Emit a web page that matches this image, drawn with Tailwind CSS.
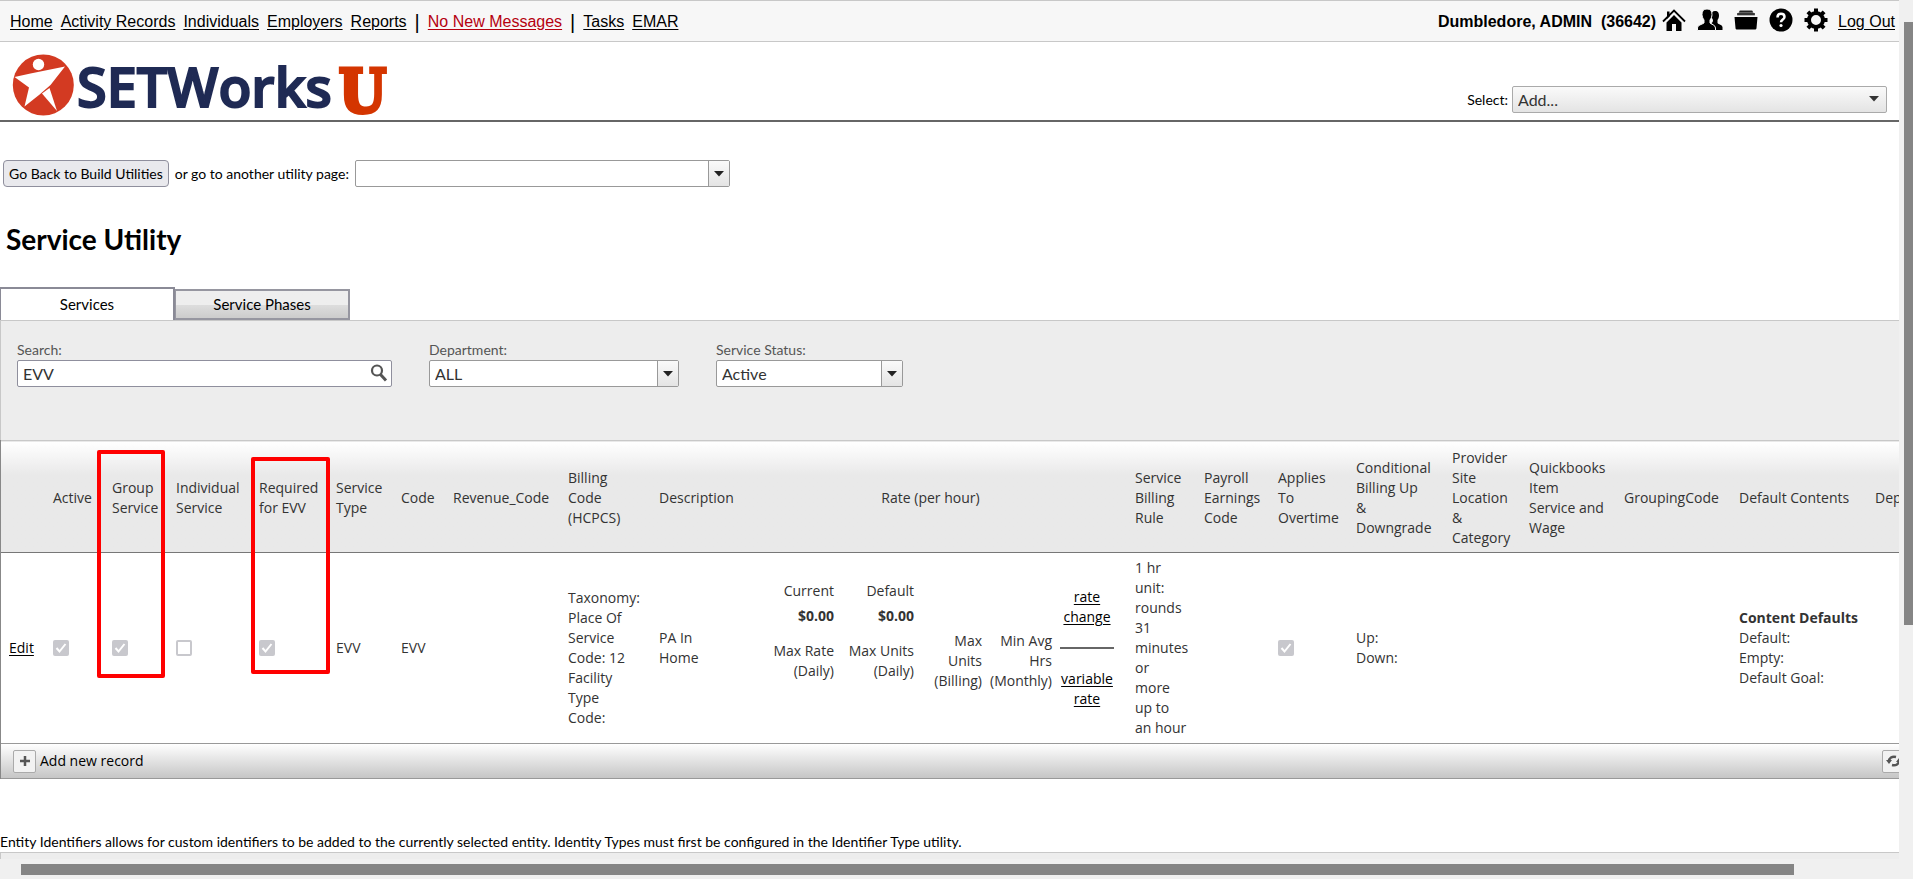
<!DOCTYPE html>
<html lang="en">
  <head>
    <meta charset="UTF-8" />
    <meta name="viewport" content="width=device-width, initial-scale=1.0" />
    <title>Service Utility</title>
    <script src="https://cdn.jsdelivr.net/npm/@tailwindcss/browser@4"></script>
  </head>

  <body class="h-screen overflow-hidden flex flex-col bg-[#f0f0f0] font-['Lato',sans-serif] text-sm text-black">
    <div class="flex flex-1 min-h-0">
      <!-- Page -->
      <div class="flex-1 min-w-0 overflow-hidden bg-white flex flex-col">

        <!-- Top bar -->
        <header class="h-[42px] shrink-0 flex justify-between items-center border-y border-[#c8c8c8] bg-[#f7f7f7] pt-0.5 pl-2.5 pr-1 font-['Liberation_Sans',Arial,sans-serif] text-base leading-5">
          <nav class="flex items-center gap-2">
            <a href="#" class="underline underline-offset-2">Home</a>
            <a href="#" class="underline underline-offset-2">Activity Records</a>
            <a href="#" class="underline underline-offset-2">Individuals</a>
            <a href="#" class="underline underline-offset-2">Employers</a>
            <a href="#" class="underline underline-offset-2">Reports</a>
            <span class="text-xl leading-5">|</span>
            <a href="#" class="underline underline-offset-2 text-[#b5000f]">No New Messages</a>
            <span class="text-xl leading-5">|</span>
            <a href="#" class="underline underline-offset-2">Tasks</a>
            <a href="#" class="underline underline-offset-2">EMAR</a>
          </nav>
          <div class="flex items-center gap-2.5">
            <span class="font-bold whitespace-pre">Dumbledore, ADMIN  (36642)</span>
            <div class="flex items-center gap-[11px] -ml-1 pb-1">
              <a href="#" aria-label="Home page">
                <svg class="w-6 h-6" viewBox="0 0 24 24"><path d="M4.500 14.500 12 7l7.500 7.500V23H14v-7h-4v7H4.500z" /><path d="M1 13.500 12 2.500l11 11" fill="none" stroke="#000" stroke-width="1.800" /><path d="M5 3.500h2.500v5L5 11z" /></svg>
              </a>
              <a href="#" aria-label="People">
                <svg class="w-[26px] h-6" viewBox="0 0 26 24"><path d="M18 3c3 0 4 2 4 4.500 0 2-.8 3.500-1.500 4.500v3c1 1.500 4.500 1.500 5 4V22h-8v-4l-3-3c1-.5 1.500-1.500 1.500-3-1-1.500-1.500-3-1.500-4.500C14.500 5 15.500 3 18 3z" /><path d="M10 1c3.500 0 5 2 5 5.500 0 2-.8 4-2 5.500v3c1.500 1.500 5.500 2 5.500 5v2.500H.5V20c0-3 4.500-3.500 6.500-5v-3C6 10.500 5 8.500 5 6.500 5 3 6.500 1 10 1z" stroke="#f7f7f7" /></svg>
              </a>
              <a href="#" aria-label="Files">
                <svg class="w-6 h-6" viewBox="0 0 24 24"><path d="M5 4C5 3 6 2.500 7 2.500h10c1 0 2 .5 2 1.500l2 3.500H3z" fill="#777" /><path d="M3 6h18M5.500 3.500h13" stroke="#222" stroke-width="1.500" /><path d="M.5 9h23l-1 11c0 1-.8 1.500-1.800 1.500H3.300c-1 0-1.800-.5-1.800-1.500z" /></svg>
              </a>
              <a href="#" aria-label="Help">
                <svg class="w-6 h-6" viewBox="0 0 24 24"><circle cx="12" cy="12" r="11.500" /><path d="M8.500 9.500C8.500 7 10 5.800 12 5.800s3.500 1.200 3.500 3.200c0 2.500-3.500 2.500-3.500 5.200" fill="none" stroke="#fff" stroke-width="2.500" /><circle cx="12" cy="17.500" r="1.600" fill="#fff" /></svg>
              </a>
              <a href="#" aria-label="Settings">
                <svg class="w-6 h-6" viewBox="0 0 24 24"><circle cx="12" cy="12" r="7" fill="none" stroke="#000" stroke-width="4" /><path d="M12 .5v5M12 18.500v5M.5 12h5M18.500 12h5M3.900 3.900l3.300 3.300M16.800 16.800l3.300 3.300M3.900 20.100l3.300-3.300M16.800 7.200l3.300-3.300" stroke="#000" stroke-width="4" /></svg>
              </a>
            </div>
            <a href="#" class="underline underline-offset-2">Log Out</a>
          </div>
        </header>

        <!-- Logo and quick add -->
        <div class="h-20 shrink-0 flex justify-between items-end border-b-2 border-[#666] pl-3 pr-3">
          <svg class="w-[380px] h-[70px] overflow-visible" viewBox="0 0 380 70" role="img" aria-label="SETWorks U">
            <circle cx="31.300" cy="35" r="30.500" fill="#d33a22" />
            <circle cx="26.500" cy="14.500" r="5.700" fill="#fff" />
            <path d="M2.500 27 18.500 23.500 53 16.500 38.500 35 27 45 12.500 56.500 17 37.500z" fill="#fff" />
            <path d="M30 43.500 37.500 38 45 61z" fill="#fff" />
            <text x="65" y="57" fill="#1f2a54" stroke="#1f2a54" stroke-width="2" font-family="Open Sans" font-weight="600" font-size="54">SETWorks</text>
            <text x="327" y="62" fill="#d43500" stroke="#d43500" stroke-width="4" font-family="DejaVu Serif Condensed, DejaVu Serif" font-weight="bold" font-size="60">U</text>
          </svg>
          <div class="flex items-center gap-1 pb-[7px]">
            <label for="add">Select:</label>
            <div class="relative w-[375px]">
              <select id="add" class="appearance-none w-full h-[27px] pl-[5px] border border-[#aaa] rounded-xs bg-linear-to-b from-[#fafafa] to-[#e4e4e4] text-base text-[#333]">
                <option>Add...</option>
              </select>
              <svg class="absolute right-2 top-2.5 w-2.5 h-1.5 pointer-events-none" viewBox="0 0 10 6"><path d="M0 0h10L5 5.500z" fill="#333" /></svg>
            </div>
          </div>
        </div>

        <!-- Utility navigation -->
        <div class="flex items-center gap-1.5 pl-[3px] mt-[38px]">
          <button class="h-[27px] px-[5px] border border-[#8f8f9d] rounded-sm bg-[#e9e9ed] whitespace-nowrap">Go Back to Build Utilities</button>
          <div class="flex items-center gap-1.5">
            <label for="utility">or go to another utility page:</label>
            <div class="relative w-[375px]">
              <select id="utility" class="block appearance-none w-full h-[27px] border border-[#999] rounded-xs bg-white text-base"><option></option></select>
              <span class="absolute inset-y-px right-px w-[21px] border-l border-[#999] bg-linear-to-b from-[#fafafa] to-[#e4e4e4] flex items-center justify-center pointer-events-none">
                <svg class="w-2.5 h-1.5" viewBox="0 0 10 6"><path d="M0 0h10L5 5.500z" fill="#222" /></svg>
              </span>
            </div>
          </div>
        </div>

        <h1 class="mt-9 ml-1.5 text-[28px] leading-8 font-bold">Service Utility</h1>

        <!-- Tabs -->
        <div class="mt-8 flex items-end" role="tablist">
          <button role="tab" class="w-[175px] h-[33px] bg-white border-t-2 border-x border-r-2 border-[#8a8a96] text-[15px]">Services</button>
          <button role="tab" class="w-[175px] h-[31px] bg-linear-to-b from-[#eee] from-50% via-[#ddd] via-52% to-[#ccc] border-2 border-l border-[#9696a0] text-[15px]">Service Phases</button>
        </div>

        <!-- Filters -->
        <section class="h-[120px] shrink-0 flex items-start gap-[37px] border-t border-l border-[#c8c8c8] bg-[#ededed] pl-4 pt-[19px]">
          <div class="w-[375px] text-[#555]">
            <label for="search" class="block leading-5">Search:</label>
            <div class="relative">
              <input id="search" type="text" value="EVV" class="block w-full h-[27px] pl-[5px] border border-[#8f8f9d] rounded-xs bg-white text-base text-[#333]" />
              <svg class="absolute right-1 top-1 w-[18px] h-[18px]" viewBox="0 0 18 18" fill="none" stroke="#555"><circle cx="7" cy="6.500" r="5" stroke-width="2.200" /><path d="m10.500 10.500 5.500 6" stroke-width="3" /></svg>
            </div>
          </div>
          <div class="w-[250px] text-[#555]">
            <label for="department" class="block leading-5">Department:</label>
            <div class="relative">
              <select id="department" class="block appearance-none w-full h-[27px] pl-[5px] border border-[#999] rounded-xs bg-white text-base text-[#333]"><option>ALL</option></select>
              <span class="absolute inset-y-px right-px w-[21px] border-l border-[#999] bg-linear-to-b from-[#fafafa] to-[#e4e4e4] flex items-center justify-center pointer-events-none">
                <svg class="w-2.5 h-1.5" viewBox="0 0 10 6"><path d="M0 0h10L5 5.500z" fill="#222" /></svg>
              </span>
            </div>
          </div>
          <div class="w-[187px] text-[#555]">
            <label for="status" class="block leading-5">Service Status:</label>
            <div class="relative">
              <select id="status" class="block appearance-none w-full h-[27px] pl-[5px] border border-[#999] rounded-xs bg-white text-base text-[#333]"><option>Active</option></select>
              <span class="absolute inset-y-px right-px w-[21px] border-l border-[#999] bg-linear-to-b from-[#fafafa] to-[#e4e4e4] flex items-center justify-center pointer-events-none">
                <svg class="w-2.5 h-1.5" viewBox="0 0 10 6"><path d="M0 0h10L5 5.500z" fill="#222" /></svg>
              </span>
            </div>
          </div>
        </section>

        <!-- Services grid -->
        <section class="relative w-[2016px] shrink-0 border-l border-[#888] font-['Open_Sans','Noto_Sans',sans-serif] text-sm leading-5 text-[#333]">
          <table class="table-fixed w-full">
            <colgroup>
              <col class="w-[44px]" />
              <col class="w-[59px]" />
              <col class="w-[64px]" />
              <col class="w-[83px]" />
              <col class="w-[77px]" />
              <col class="w-[65px]" />
              <col class="w-[52px]" />
              <col class="w-[115px]" />
              <col class="w-[91px]" />
              <col class="w-[91px]" />
              <col class="w-[385px]" />
              <col class="w-[69px]" />
              <col class="w-[74px]" />
              <col class="w-[78px]" />
              <col class="w-[96px]" />
              <col class="w-[77px]" />
              <col class="w-[95px]" />
              <col class="w-[115px]" />
              <col class="w-[136px]" />
              <col class="w-[149px]" />
            </colgroup>
            <thead>
              <tr class="h-28 border-t border-t-[#c8c8c8] border-b border-b-[#777] bg-linear-to-b from-white to-[#e9e9e9] to-30% text-left *:font-normal *:pl-2 *:pt-1.5 *:pb-1">
                <th></th>
                <th>Active</th>
                <th>Group Service</th>
                <th>Individual Service</th>
                <th>Required for EVV</th>
                <th>Service Type</th>
                <th>Code</th>
                <th>Revenue_Code</th>
                <th>Billing<br />Code<br />(HCPCS)</th>
                <th>Description</th>
                <th class="text-center pr-4">Rate (per hour)</th>
                <th>Service Billing Rule</th>
                <th>Payroll Earnings Code</th>
                <th>Applies<br />To<br />Overtime</th>
                <th>Conditional Billing Up<br />&amp;<br />Downgrade</th>
                <th>Provider<br />Site<br />Location<br />&amp;<br />Category</th>
                <th>Quickbooks<br />Item<br />Service and<br />Wage</th>
                <th>GroupingCode</th>
                <th>Default Contents</th>
                <th>Department</th>
              </tr>
            </thead>
            <tbody>
              <tr class="h-[190px] bg-white *:pl-2 *:py-[5px]">
                <td><a href="#" class="underline underline-offset-2 text-black">Edit</a></td>
                <td>
                  <input type="checkbox" checked disabled aria-label="Active" class="peer sr-only" />
                  <svg class="w-4 h-4" viewBox="0 0 16 16"><rect width="16" height="16" rx="2" fill="#c8c8cd" /><path d="m3.500 8 3 3.500 6-7.500" fill="none" stroke="#fff" stroke-width="2" /></svg>
                </td>
                <td>
                  <input type="checkbox" checked disabled aria-label="Group Service" class="peer sr-only" />
                  <svg class="w-4 h-4" viewBox="0 0 16 16"><rect width="16" height="16" rx="2" fill="#c8c8cd" /><path d="m3.500 8 3 3.500 6-7.500" fill="none" stroke="#fff" stroke-width="2" /></svg>
                </td>
                <td>
                  <input type="checkbox" disabled aria-label="Individual Service" class="block appearance-none w-4 h-4 border-2 border-[#c8c8cd] rounded-xs bg-white" />
                </td>
                <td>
                  <input type="checkbox" checked disabled aria-label="Required for EVV" class="peer sr-only" />
                  <svg class="w-4 h-4" viewBox="0 0 16 16"><rect width="16" height="16" rx="2" fill="#c8c8cd" /><path d="m3.500 8 3 3.500 6-7.500" fill="none" stroke="#fff" stroke-width="2" /></svg>
                </td>
                <td>EVV</td>
                <td>EVV</td>
                <td></td>
                <td><br />Taxonomy:<br />Place Of<br />Service<br />Code: 12<br />Facility<br />Type<br />Code:</td>
                <td>PA In<br />Home</td>
                <td>
                  <div class="flex justify-end items-center gap-2 pr-[13px]">
                    <div class="grid grid-cols-[80px_80px_68px_70px] grid-rows-[20px_20px_60px_20px] gap-y-[5px] items-center text-right">
                      <span>Current</span>
                      <span>Default</span>
                      <span></span>
                      <span></span>
                      <b>$0.00</b>
                      <b>$0.00</b>
                      <span></span>
                      <span></span>
                      <span>Max Rate<br />(Daily)</span>
                      <span>Max Units<br />(Daily)</span>
                      <span>Max<br />Units<br />(Billing)</span>
                      <span>Min Avg<br />Hrs<br />(Monthly)</span>
                    </div>
                    <div class="w-[54px] flex flex-col gap-5 text-center text-black">
                      <a href="#" class="underline underline-offset-2">rate change</a>
                      <hr class="border-t-2 border-[#666]" />
                      <a href="#" class="underline underline-offset-2">variable rate</a>
                    </div>
                  </div>
                </td>
                <td>1 hr<br />unit:<br />rounds<br />31<br />minutes<br />or<br />more<br />up to<br />an hour</td>
                <td></td>
                <td>
                  <input type="checkbox" checked disabled aria-label="Applies To Overtime" class="peer sr-only" />
                  <svg class="w-4 h-4" viewBox="0 0 16 16"><rect width="16" height="16" rx="2" fill="#c8c8cd" /><path d="m3.500 8 3 3.500 6-7.500" fill="none" stroke="#fff" stroke-width="2" /></svg>
                </td>
                <td>Up:<br />Down:</td>
                <td></td>
                <td></td>
                <td></td>
                <td><b>Content Defaults</b><br />Default:<br />Empty:<br />Default Goal:</td>
                <td></td>
              </tr>
            </tbody>
          </table>

          <!-- Grid footer -->
          <div class="h-9 flex items-center border-y border-[#999] bg-linear-to-b from-white to-[#c6c6c6] pl-3 text-black">
            <div class="w-[1869px] flex items-center gap-1">
              <button id="addrecord" aria-label="Add" class="w-[23px] h-[23px] flex items-center justify-center border border-[#aaa] rounded-xs bg-[#f2f2f2]">
                <svg class="w-3 h-3" viewBox="0 0 12 12"><path d="M6 1v10M1 6h10" stroke="#555" stroke-width="2.500" /></svg>
              </button>
              <label for="addrecord">Add new record</label>
            </div>
            <button aria-label="Refresh" class="w-[23px] h-[23px] flex items-center justify-center border border-[#aaa] rounded-xs bg-[#f2f2f2]">
              <svg class="w-4 h-4" viewBox="0 0 16 16" fill="none" stroke="#555" stroke-width="2.500"><path d="M3 8.500C3 5 6 3 10 4M13 7.500C13 11 10 13 6 12" /><path d="M0 7h6L3 11zM10 9h6l-3-4z" fill="#555" stroke="none" /></svg>
            </button>
          </div>

          <!-- Highlighted columns -->
          <div class="absolute left-24 top-2.5 w-[68px] h-[228px] border-4 border-[#f00] rounded-xs"></div>
          <div class="absolute left-[250px] top-[17px] w-[79px] h-[217px] border-4 border-[#f00] rounded-xs"></div>
        </section>

        <p class="mt-[53px] leading-5 whitespace-nowrap">Entity Identifiers allows for custom identifiers to be added to the currently selected entity. Identity Types must first be configured in the Identifier Type utility.</p>
        <div class="flex-1 border-t border-l border-[#c8c8c8] bg-[#ededed]"></div>
      </div>

      <!-- Vertical scrollbar -->
      <div class="w-3.5 flex justify-end pt-[22px]">
        <div class="w-[9px] h-[72%] bg-[#858585]"></div>
      </div>
    </div>

    <!-- Horizontal scrollbar -->
    <div class="h-5 pt-[5px] pl-[21px]">
      <div class="w-[93.7%] h-[11px] bg-[#858585]"></div>
    </div>
  </body>
</html>
